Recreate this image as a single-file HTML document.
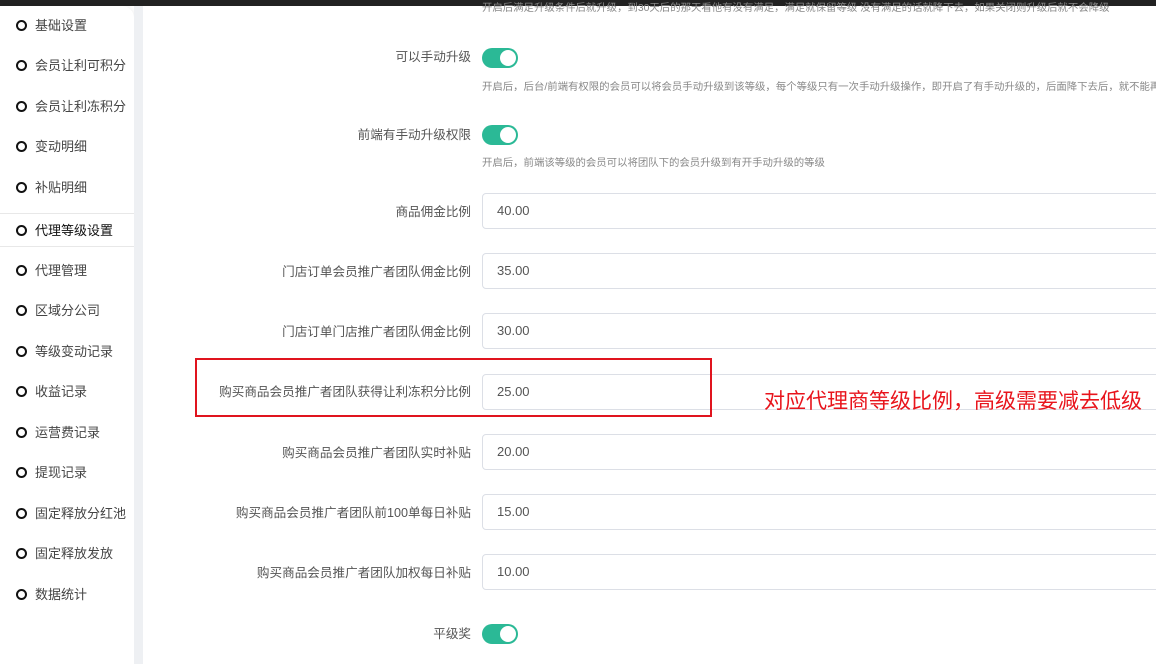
<!DOCTYPE html>
<html><head><meta charset="utf-8"><style>
*{margin:0;padding:0;box-sizing:border-box}
body{width:1156px;height:664px;overflow:hidden;background:#fff;font-family:"Liberation Sans","Noto Sans CJK SC",sans-serif;position:relative}
.top{position:absolute;left:0;top:0;width:1156px;height:6px;background:#222}
.side{position:absolute;left:0;top:6px;width:134px;height:658px;background:#fff;border-top-right-radius:12px;box-shadow:2px 0 4px rgba(0,0,0,.05)}
.gap{position:absolute;left:134px;top:6px;width:9px;height:658px;background:#eef0f3}
.mi{position:absolute;left:0;width:134px;height:33px;font-size:13px;color:#444;line-height:33px}
.mi i{position:absolute;left:16px;top:11px;width:11px;height:11px;border:2px solid #111;border-radius:50%}
.mi span{position:absolute;left:35px}
.act{border-top:1px solid #e8e8e8;border-bottom:1px solid #e8e8e8;color:#111}
.lab{position:absolute;right:685px;font-size:12.6px;color:#555;white-space:nowrap;margin-top:-2px}
.inp{position:absolute;left:482px;width:700px;height:36px;border:1px solid #dcdfe6;border-radius:4px;font-size:13px;color:#555;line-height:34px;padding-left:14px}
.sw{position:absolute;left:482px;width:36px;height:20px;border-radius:10px;background:#2bb996}
.sw:after{content:"";position:absolute;right:2px;top:2px;width:16px;height:16px;border-radius:50%;background:#fff}
.tip{position:absolute;left:482px;font-size:10.4px;color:#888;white-space:nowrap}
</style></head><body>
<div class="top"></div>
<div class="side"></div>
<div class="gap"></div>
<div class="mi" style="top:9px"><i></i><span>基础设置</span></div>
<div class="mi" style="top:49px"><i></i><span>会员让利可积分</span></div>
<div class="mi" style="top:90px"><i></i><span>会员让利冻积分</span></div>
<div class="mi" style="top:130px"><i></i><span>变动明细</span></div>
<div class="mi" style="top:171px"><i></i><span>补贴明细</span></div>
<div class="mi act" style="top:213px;height:34px"><i style="border-color:#111"></i><span>代理等级设置</span></div>
<div class="mi" style="top:254px"><i></i><span>代理管理</span></div>
<div class="mi" style="top:294px"><i></i><span>区域分公司</span></div>
<div class="mi" style="top:335px"><i></i><span>等级变动记录</span></div>
<div class="mi" style="top:375px"><i></i><span>收益记录</span></div>
<div class="mi" style="top:416px"><i></i><span>运营费记录</span></div>
<div class="mi" style="top:456px"><i></i><span>提现记录</span></div>
<div class="mi" style="top:497px"><i></i><span>固定释放分红池</span></div>
<div class="mi" style="top:537px"><i></i><span>固定释放发放</span></div>
<div class="mi" style="top:578px"><i></i><span>数据统计</span></div>

<div class="tip" style="top:-1px">开启后满足升级条件后就升级，到30天后的那天看他有没有满足，满足就保留等级 没有满足的话就降下去，如果关闭则升级后就不会降级</div>
<div class="lab" style="top:48px">可以手动升级</div><div class="sw" style="top:48px"></div>
<div class="tip" style="top:78px">开启后，后台/前端有权限的会员可以将会员手动升级到该等级，每个等级只有一次手动升级操作，即开启了有手动升级的，后面降下去后，就不能再手动升级了</div>
<div class="lab" style="top:126px">前端有手动升级权限</div><div class="sw" style="top:125px"></div>
<div class="tip" style="top:154px">开启后，前端该等级的会员可以将团队下的会员升级到有开手动升级的等级</div>

<div class="lab" style="top:203px">商品佣金比例</div><div class="inp" style="top:193px">40.00</div>
<div class="lab" style="top:263px">门店订单会员推广者团队佣金比例</div><div class="inp" style="top:253px">35.00</div>
<div class="lab" style="top:323px">门店订单门店推广者团队佣金比例</div><div class="inp" style="top:313px">30.00</div>
<div class="lab" style="top:383px">购买商品会员推广者团队获得让利冻积分比例</div><div class="inp" style="top:374px">25.00</div>
<div class="lab" style="top:444px">购买商品会员推广者团队实时补贴</div><div class="inp" style="top:434px">20.00</div>
<div class="lab" style="top:504px">购买商品会员推广者团队前100单每日补贴</div><div class="inp" style="top:494px">15.00</div>
<div class="lab" style="top:564px">购买商品会员推广者团队加权每日补贴</div><div class="inp" style="top:554px">10.00</div>
<div class="lab" style="top:625px">平级奖</div><div class="sw" style="top:624px"></div>

<div style="position:absolute;left:195px;top:358px;width:517px;height:59px;border:2px solid #e0141e"></div>
<div style="position:absolute;left:764px;top:385px;font-size:21px;color:#e8141c;white-space:nowrap">对应代理商等级比例，高级需要减去低级</div>
</body></html>
